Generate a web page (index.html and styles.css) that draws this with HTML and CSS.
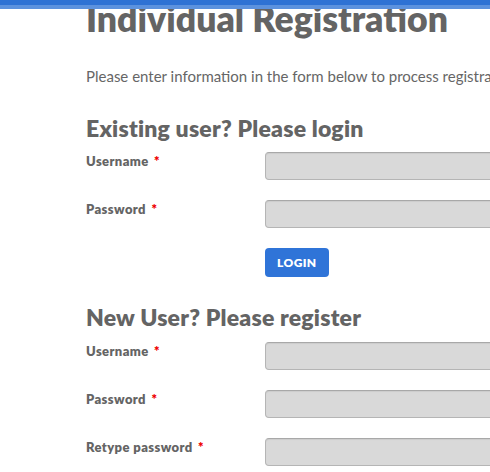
FILE: index.html
```html
<!DOCTYPE html>
<html lang="en">
<head>
<meta charset="utf-8">
<title>Individual Registration</title>
<link rel="stylesheet" href="styles.css">
</head>
<body>
<div class="topbar"></div>
<main class="page">
  <h1 class="title">Individual Registration</h1>
  <p class="intro">Please enter information in the form below to process registration requests for individuals.</p>

  <h2 class="section-title">Existing user? Please login</h2>
  <form class="form">
    <div class="row">
      <label class="label">Username <span class="req">*</span></label>
      <input class="field" type="text">
    </div>
    <div class="row">
      <label class="label">Password <span class="req">*</span></label>
      <input class="field" type="password">
    </div>
    <div class="row">
      <span class="label"></span>
      <button class="btn" type="button">LOGIN</button>
    </div>
  </form>

  <h2 class="section-title second">New User? Please register</h2>
  <form class="form">
    <div class="row">
      <label class="label">Username <span class="req">*</span></label>
      <input class="field" type="text">
    </div>
    <div class="row">
      <label class="label">Password <span class="req">*</span></label>
      <input class="field" type="password">
    </div>
    <div class="row">
      <label class="label">Retype password <span class="req">*</span></label>
      <input class="field" type="password">
    </div>
  </form>
</main>
</body>
</html>
```
FILE: styles.css
```css
html, body {
  margin: 0;
  padding: 0;
  overflow: hidden;
  background: #ffffff;
}
body {
  font-family: Lato, "Liberation Sans", sans-serif;
  color: #666666;
}
.topbar {
  position: fixed;
  top: 0;
  left: 0;
  right: 0;
  height: 5px;
  background: #2e72d4;
  border-bottom: 4px solid #5c92de;
  z-index: 10;
}
.page {
  padding-left: 86px;
  width: 600px;
}
.title {
  margin: 0;
  font-size: 35.6px;
  line-height: 38px;
  font-weight: 800;
  color: #646464;
  white-space: nowrap;
}
.intro {
  margin: 28px 0 0;
  font-size: 15px;
  line-height: 20px;
  white-space: nowrap;
}
.section-title {
  margin: 28px 0 0;
  font-size: 23px;
  line-height: 28px;
  font-weight: 800;
  letter-spacing: 0.2px;
  color: #646464;
}
.section-title.second {
  margin-top: 26px;
}
.form {
  margin: 10px 0 0;
  display: flex;
  flex-direction: column;
  gap: 20px;
}
.second + .form {
  margin-top: 11px;
}
.row {
  display: flex;
  align-items: flex-start;
}
.label {
  width: 179px;
  flex: none;
  padding-top: 1px;
  font-size: 13px;
  line-height: 16px;
  font-weight: 800;
  letter-spacing: 0.4px;
  color: #646464;
}
.req {
  color: #ee0000;
  margin-left: 2px;
}
.field {
  box-sizing: border-box;
  width: 300px;
  height: 28px;
  margin: 0;
  border: 1px solid #b5b5b5;
  border-top-color: #a8a8a8;
  border-radius: 4px;
  background: #d9d9d9;
  box-shadow: inset 0 1px 1px rgba(0,0,0,0.06);
}
.btn {
  box-sizing: border-box;
  height: 29px;
  padding: 0 12px;
  border: none;
  border-radius: 4px;
  background: #2f74d8;
  color: #ffffff;
  font-family: Lato, "Liberation Sans", sans-serif;
  font-size: 12px;
  font-weight: 800;
  letter-spacing: 0.4px;
}
```
